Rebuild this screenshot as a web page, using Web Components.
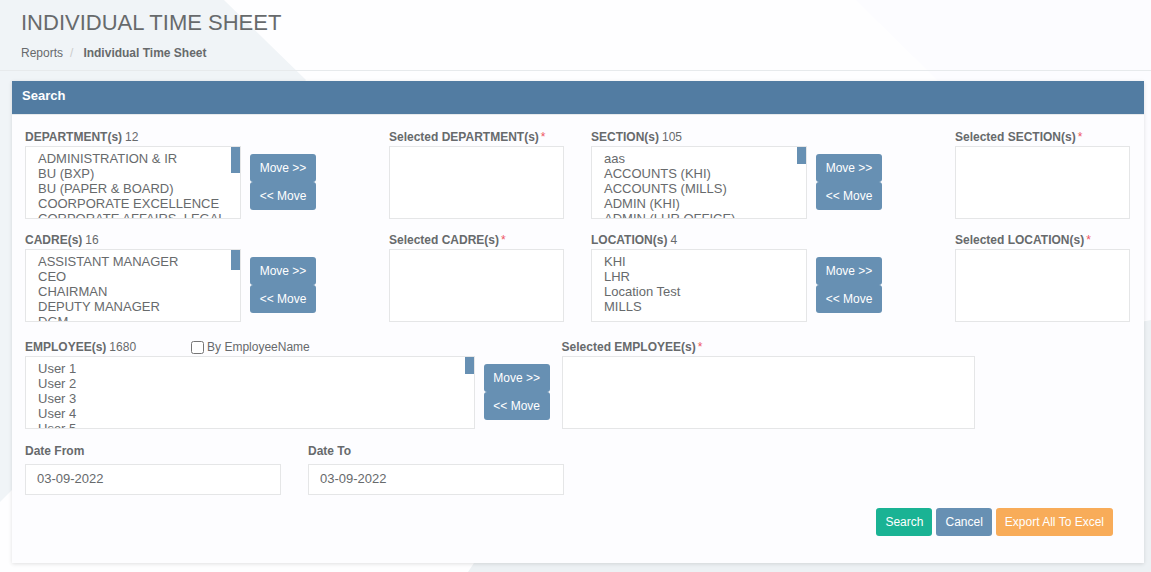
<!DOCTYPE html>
<html lang="en">
<head>
<meta charset="utf-8">
<meta name="viewport" content="width=device-width, initial-scale=1">
<title>Individual Time Sheet</title>
<style>
  html { height: 100%; }
  body {
    margin: 0; min-height: 100%; position: relative; background: #fefeff;
    font: 12px/18px "Liberation Sans", Arial, sans-serif; color: #676a6c;
    --line: #e5e6e7; --blue: #6790b3; --bar: #527ca2;
  }
</style>
</head>
<body>
<page-backdrop></page-backdrop>
<page-heading heading="INDIVIDUAL TIME SHEET">
  <a slot="parent" href="#reports">Reports</a>
  <strong slot="current">Individual Time Sheet</strong>
</page-heading>
<main>
  <search-panel heading="Search">
    <pair-grid>
      <list-transfer name="DEPARTMENT" count="12" thumb="26" items="ADMINISTRATION &amp; IR|BU (BXP)|BU (PAPER &amp; BOARD)|COORPORATE EXCELLENCE|CORPORATE AFFAIRS, LEGAL"></list-transfer>
      <list-transfer name="SECTION" count="105" thumb="17" items="aas|ACCOUNTS (KHI)|ACCOUNTS (MILLS)|ADMIN (KHI)|ADMIN (LHR OFFICE)"></list-transfer>
      <list-transfer name="CADRE" count="16" thumb="20" items="ASSISTANT MANAGER|CEO|CHAIRMAN|DEPUTY MANAGER|DGM"></list-transfer>
      <list-transfer name="LOCATION" count="4" thumb="0" items="KHI|LHR|Location Test|MILLS"></list-transfer>
    </pair-grid>
    <list-transfer wide name="EMPLOYEE" count="1680" thumb="17" items="User 1|User 2|User 3|User 4|User 5" toggle="By EmployeeName"></list-transfer>
    <date-row>
      <date-field label="Date From" value="03-09-2022"></date-field>
      <date-field label="Date To" value="03-09-2022"></date-field>
    </date-row>
    <action-button slot="actions" tone="green">Search</action-button>
    <action-button slot="actions">Cancel</action-button>
    <action-button slot="actions" tone="orange">Export All To Excel</action-button>
  </search-panel>
</main>
<script>
const esc = s => s.replace(/&/g, '&amp;').replace(/</g, '&lt;');
const define = (name, render) => customElements.define(name, class extends HTMLElement {
  constructor() { super(); this.attachShadow({ mode: 'open' }); }
  connectedCallback() {
    this.shadowRoot.innerHTML = '<style>*{box-sizing:border-box}:host{box-sizing:border-box}</style>' + render(this);
  }
});

define('page-backdrop', () => `
  <style>
    :host { position: absolute; inset: 0; z-index: -1; }
    svg { display: block; width: 100%; height: 100%; }
  </style>
  <svg viewBox="0 0 1151 572" preserveAspectRatio="none" aria-hidden="true">
    <path fill="#f0f4f7" d="M0 0H224L306 80L12 490L0 502Z"/>
    <path fill="#fcfcff" d="M856 0H1151V320H1050L937 80Z"/>
    <path fill="#edf1f4" d="M1151 320V572H468L474 563L560 430Z"/>
  </svg>`);

define('page-heading', el => `
  <style>
    :host { display: block; padding: 8px 21px 8px; border-bottom: 1px solid #e7eaec; }
    h1 { margin: 0 0 6px; font-size: 22px; line-height: 30px; font-weight: 400; }
    nav { display: flex; line-height: 18px; }
    i { font-style: normal; color: #ccc; padding: 0 10px 0 7px; }
    ::slotted(a) { color: inherit; text-decoration: none; }
  </style>
  <h1>${el.getAttribute('heading')}</h1>
  <nav aria-label="Breadcrumb"><slot name="parent"></slot><i>/</i><slot name="current"></slot></nav>`);

define('search-panel', el => `
  <style>
    :host { display: block; margin: 10px 7px 9px 12px; background: #fdfdff; box-shadow: 0 1px 4px rgba(0,0,0,.12); }
    h2 { margin: 0; height: 34px; padding: 5px 10px 8px; background: var(--bar); color: #fff;
         font-size: 13px; line-height: 20px; border-bottom: 1px solid #e7eaec; }
    form { padding: 13px 14px 27px 13px; }
    footer { display: flex; justify-content: flex-end; gap: 4px; padding: 13px 17px 0 0; }
  </style>
  <h2>${el.getAttribute('heading')}</h2>
  <form><slot></slot><footer><slot name="actions"></slot></footer></form>`);

define('pair-grid', () => `
  <style>
    :host { display: grid; grid-template-columns: 1fr 1fr; gap: 12px 27px; margin-bottom: 16px; }
  </style>
  <slot></slot>`);

define('action-button', el => {
  const tone = { green: '#1ab394', orange: '#f8ac59' }[el.getAttribute('tone')] || 'var(--blue)';
  return `
  <style>
    :host { display: block; }
    button { display: block; width: 100%; height: 28px; padding: 0 9px; border: 0; border-radius: 3px;
      background: ${tone}; color: #fff; font: inherit; white-space: nowrap; cursor: pointer; }
  </style>
  <button type="button"><slot></slot></button>`;
});

define('list-transfer', el => {
  const name = el.getAttribute('name'), thumb = +el.getAttribute('thumb'), toggle = el.getAttribute('toggle');
  const options = el.getAttribute('items').split('|').map(t => `<option>${esc(t)}</option>`).join('');
  return `
  <style>
    :host { display: grid; grid-template-columns: 216fr 148fr 175fr; min-width: 0; }
    :host([wide]) { grid-template-columns: 450fr 87fr 414fr; margin-right: 14%; }
    .head { display: flex; height: 18px; line-height: 18px; white-space: nowrap; }
    .head b { margin-right: 3px; }
    .check { display: flex; align-items: center; gap: 3px; margin-left: 55px; }
    .check input { width: 13px; height: 13px; margin: 0; }
    .star { color: #ed5565; margin-left: 2px; }
    .box { position: relative; }
    select { display: block; width: 100%; height: 73px; margin: 0; padding: 4px 12px; overflow-x: hidden;
      border: 1px solid var(--line); border-radius: 0; background: #fff; color: inherit;
      font: 13px/15px "Liberation Sans", Arial, sans-serif; scrollbar-width: none; outline: 0; }
    option { padding: 0; min-height: 15px; height: 15px; line-height: 15px; }
    .thumb { position: absolute; top: 1px; right: 1px; width: 9px; height: ${thumb}px; background: var(--blue); }
    .moves { display: flex; flex-direction: column; align-items: flex-start; padding: 26px 0 0 9px; }
    .moves action-button { min-width: 66px; }
  </style>
  <div>
    <div class="head"><label for="from"><b>${name}(s)</b>${el.getAttribute('count')}</label>
      ${toggle ? `<label class="check"><input type="checkbox">${toggle}</label>` : ''}</div>
    <div class="box"><select id="from" multiple>${options}</select>${thumb ? '<span class="thumb" aria-hidden="true"></span>' : ''}</div>
  </div>
  <div class="moves"><action-button>Move &gt;&gt;</action-button><action-button>&lt;&lt; Move</action-button></div>
  <div>
    <div class="head"><label for="to"><b style="margin:0">Selected ${name}(s)</b><span class="star">*</span></label></div>
    <select id="to" multiple></select>
  </div>`;
});

define('date-row', () => `
  <style>
    :host { display: grid; grid-template-columns: repeat(4, 1fr); gap: 27px; margin-top: 13px; }
  </style>
  <slot></slot>`);

define('date-field', el => `
  <style>
    :host { display: block; }
    label { display: block; font-weight: 700; margin-bottom: 4px; }
    input { display: block; width: 100%; height: 31px; padding: 0 11px 2px; border: 1px solid var(--line);
      border-radius: 0; background: #fff; color: inherit; font: 13px "Liberation Sans", Arial, sans-serif; outline: 0; }
  </style>
  <label for="d">${el.getAttribute('label')}</label>
  <input id="d" type="text" value="${el.getAttribute('value')}">`);
</script>
</body>
</html>
